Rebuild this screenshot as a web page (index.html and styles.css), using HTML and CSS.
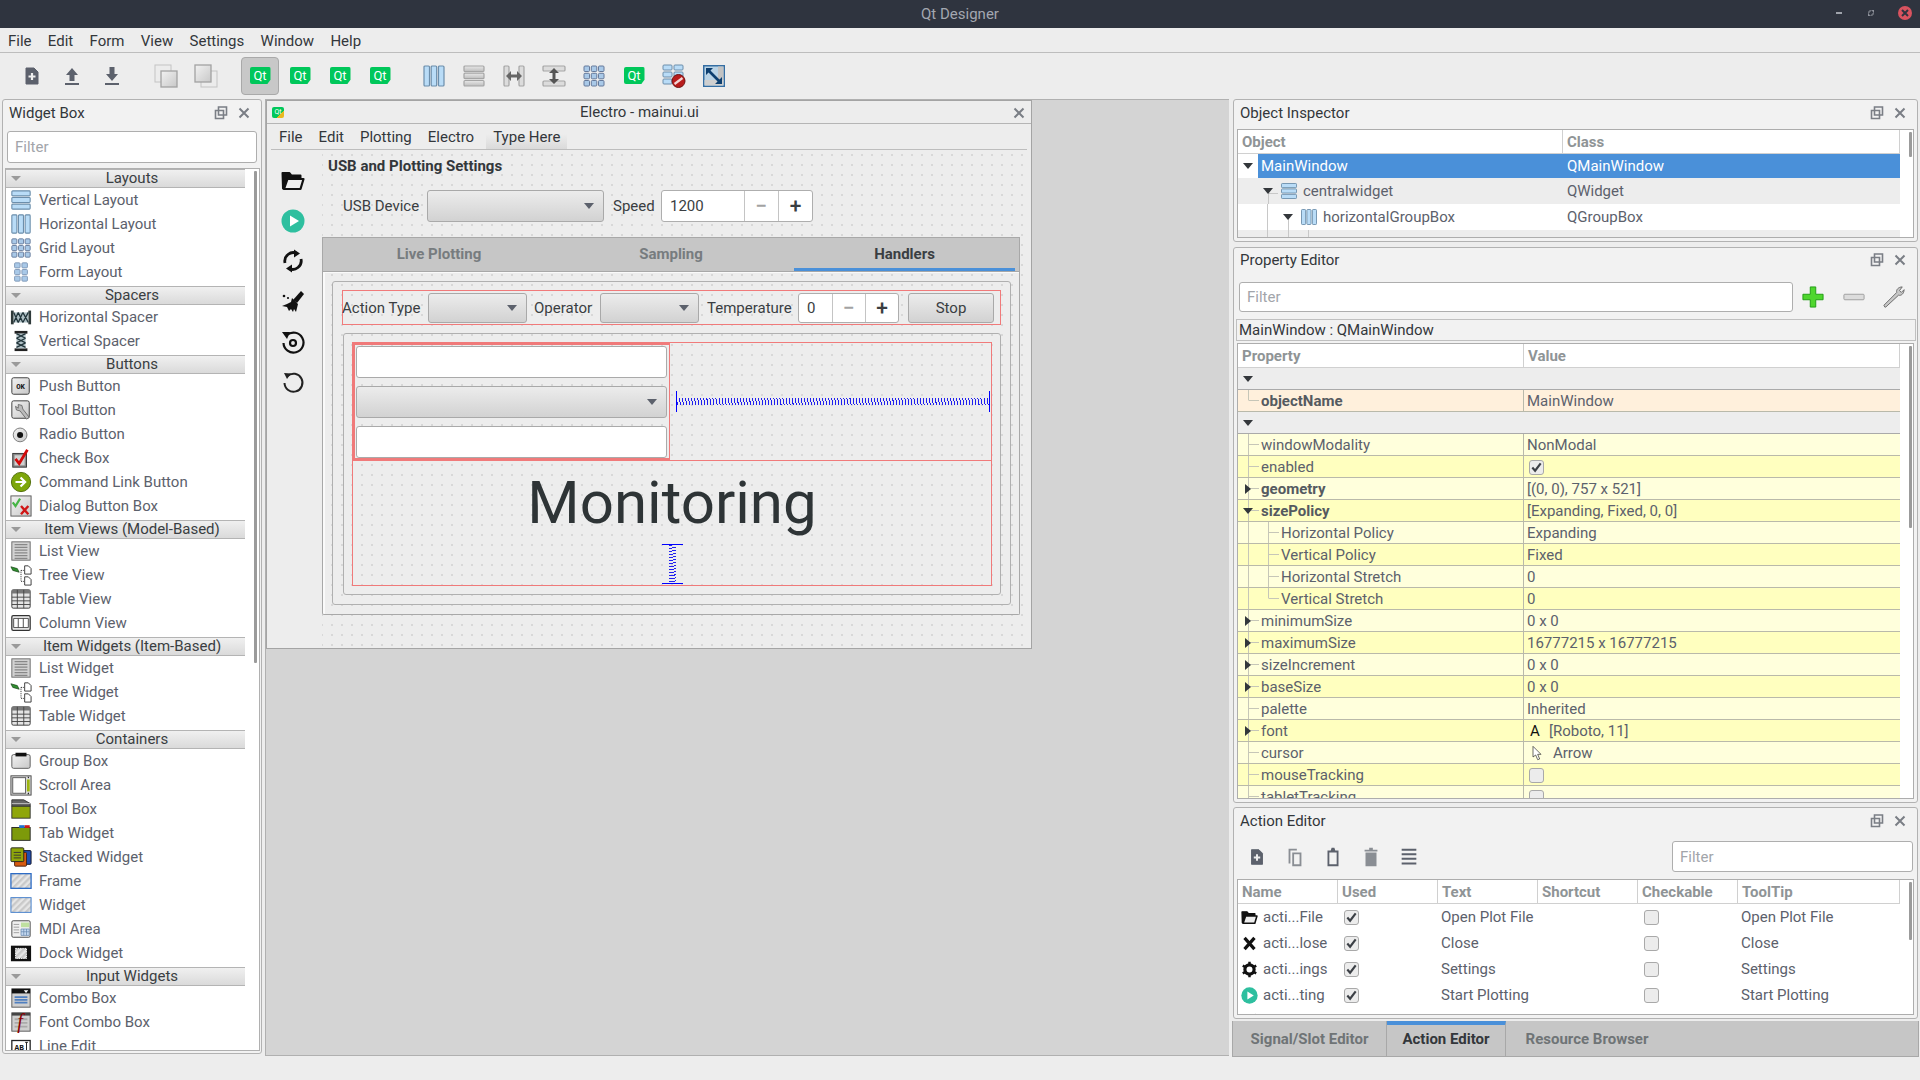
FILE: index.html
```html
<!DOCTYPE html>
<html lang="en">
<head>
    <meta charset="UTF-8">
    <title>Qt Designer</title>
    <link rel="stylesheet" href="styles.css">
</head>
<body>
<svg class="defs" width="0" height="0">
    <defs>
        <linearGradient id="gbar" x1="0" y1="0" x2="0" y2="1"><stop offset="0" stop-color="#e8e8e8"/><stop offset="1" stop-color="#bdbdbd"/></linearGradient>
        <linearGradient id="gsheet" x1="0" y1="0" x2="1" y2="1"><stop offset="0" stop-color="#f2f2f2"/><stop offset="1" stop-color="#c8c8c8"/></linearGradient>
        <pattern id="hatch" width="5" height="5" patternUnits="userSpaceOnUse" patternTransform="rotate(45)"><rect width="5" height="5" fill="#e6e6e6"/><rect width="2.5" height="5" fill="#c9c9c9"/></pattern>
        <symbol id="i-new" viewBox="0 0 24 24"><path d="M6 4h8l4 4v12H6z" fill="#5c616c" stroke="#5c616c" stroke-linejoin="round"/><path d="M12 9v7M8.5 12.500h7" stroke="#eee" stroke-width="2.200"/></symbol>
        <symbol id="i-up" viewBox="0 0 24 24"><path d="M12 4l6 7h-3.500v6h-5v-6H6z" fill="#5c616c"/><rect x="5" y="19" width="14" height="2" fill="#5c616c"/></symbol>
        <symbol id="i-down" viewBox="0 0 24 24"><path d="M9.500 3h5v7H18l-6 7-6-7h3.500z" fill="#5c616c"/><rect x="5" y="19" width="14" height="2" fill="#5c616c"/></symbol>
        <symbol id="i-casc1" viewBox="0 0 24 24"><rect x="1" y="1" width="16" height="17" fill="#ececec" stroke="#c4c4c4"/><rect x="7" y="7" width="16" height="16" fill="url(#gsheet)" stroke="#a2a2a2" stroke-width="1.300"/></symbol>
        <symbol id="i-casc2" viewBox="0 0 24 24"><rect x="7" y="7" width="16" height="16" fill="#ececec" stroke="#c4c4c4"/><rect x="1" y="1" width="16" height="17" fill="url(#gsheet)" stroke="#a2a2a2" stroke-width="1.300"/></symbol>
        <symbol id="i-hl" viewBox="0 0 24 24"><g fill="#b9dcf7" stroke="#6c8eab" stroke-width="1.200"><rect x="2" y="2" width="5.500" height="20" rx="1"/><rect x="9.200" y="2" width="5.500" height="20" rx="1"/><rect x="16.500" y="2" width="5.500" height="20" rx="1"/></g></symbol>
        <symbol id="i-vl" viewBox="0 0 24 24"><g fill="#b9dcf7" stroke="#6c8eab" stroke-width="1.200"><rect x="2" y="2" width="20" height="5.500" rx="1"/><rect x="2" y="9.200" width="20" height="5.500" rx="1"/><rect x="2" y="16.500" width="20" height="5.500" rx="1"/></g></symbol>
        <symbol id="i-vlg" viewBox="0 0 24 24"><g fill="url(#gbar)" stroke="#a5a5a5" stroke-width="1.200"><rect x="2" y="2" width="20" height="5.500" rx="1"/><rect x="2" y="9.200" width="20" height="5.500" rx="1"/><rect x="2" y="16.500" width="20" height="5.500" rx="1"/></g></symbol>
        <symbol id="i-hsp" viewBox="0 0 24 24"><g fill="#dcdcdc" stroke="#a5a5a5" stroke-width="1.200"><rect x="2" y="2" width="5" height="20" rx="1"/><rect x="17" y="2" width="5" height="20" rx="1"/></g><path d="M7 12h10" stroke="#666" stroke-width="3"/><path d="M9 7l-5 5 5 5zM15 7l5 5-5 5z" fill="#666"/></symbol>
        <symbol id="i-vsp" viewBox="0 0 24 24"><g fill="#dcdcdc" stroke="#a5a5a5" stroke-width="1.200"><rect x="1" y="2" width="22" height="5" rx="1"/><rect x="1" y="17" width="22" height="5" rx="1"/></g><path d="M12 7v10" stroke="#555" stroke-width="3"/><path d="M7 9l5-5 5 5zM7 15l5 5 5-5z" fill="#555"/></symbol>
        <symbol id="i-grid" viewBox="0 0 24 24"><g fill="#a9c9e8" stroke="#65799a"><rect x="2" y="2" width="5.500" height="5.500" rx="1"/><rect x="9.300" y="2" width="5.500" height="5.500" rx="1"/><rect x="16.500" y="2" width="5.500" height="5.500" rx="1"/><rect x="2" y="9.300" width="5.500" height="5.500" rx="1"/><rect x="9.300" y="9.300" width="5.500" height="5.500" rx="1"/><rect x="16.500" y="9.300" width="5.500" height="5.500" rx="1"/><rect x="2" y="16.500" width="5.500" height="5.500" rx="1"/><rect x="9.300" y="16.500" width="5.500" height="5.500" rx="1"/><rect x="16.500" y="16.500" width="5.500" height="5.500" rx="1"/></g></symbol>
        <symbol id="i-form" viewBox="0 0 24 24"><g fill="#a9c9e8" stroke="#7f97b6"><rect x="5" y="2" width="6" height="5.500" rx="1"/><rect x="13" y="2" width="6" height="5.500" rx="1"/><rect x="5" y="9.300" width="6" height="5.500" rx="1"/><rect x="13" y="9.300" width="6" height="5.500" rx="1"/><rect x="5" y="16.500" width="6" height="5.500" rx="1"/><rect x="13" y="16.500" width="6" height="5.500" rx="1"/></g></symbol>
        <symbol id="i-break" viewBox="0 0 24 24"><g fill="#b9dcf7" stroke="#6c8eab"><rect x="1" y="1" width="9" height="5" rx="1"/><rect x="12" y="1" width="9" height="5" rx="1"/><rect x="1" y="8" width="9" height="5" rx="1"/><rect x="12" y="8" width="9" height="5" rx="1"/><rect x="1" y="15" width="9" height="5" rx="1"/></g><circle cx="16.500" cy="17" r="6.500" fill="#b81c1c" stroke="#6d1010"/><path d="M12.500 20l8-6" stroke="#f3d6d6" stroke-width="2.200"/></symbol>
        <symbol id="i-adjust" viewBox="0 0 24 24"><rect x="1" y="1" width="22" height="22" fill="#356ea3"/><rect x="2.500" y="2.500" width="19" height="19" fill="#b9d3e6"/><rect x="16" y="2.500" width="5.500" height="14" fill="#c2c2c2"/><rect x="2.500" y="16" width="19" height="5.500" fill="#cfcfcf"/><path d="M5 5l14 14" stroke="#0d3f70" stroke-width="2.600"/><path d="M4 4h7l-7 7zM20 20h-7l7-7z" fill="#0d3f70"/></symbol>
        <symbol id="i-hspc" viewBox="0 0 24 24"><rect x="1" y="5" width="3" height="15" fill="#2f3a3a"/><rect x="20" y="5" width="3" height="15" fill="#2f3a3a"/><rect x="4" y="7" width="16" height="11" fill="#aebfc4"/><path d="M4 7l5 11M9 7l5 11M14 7l6 11M9 7l-5 11M14 7l-5 11M20 7l-6 11" stroke="#21343a" stroke-width="1.400"/></symbol>
        <symbol id="i-vspc" viewBox="0 0 24 24"><rect x="5" y="1" width="14" height="3" fill="#222"/><rect x="5" y="20" width="14" height="3" fill="#222"/><rect x="7" y="4" width="10" height="16" fill="#b2c3c8"/><path d="M7 4l10 5M7 9l10 5M7 14l10 5M17 4L7 9M17 9L7 14M17 14L7 19" stroke="#21343a" stroke-width="1.400"/></symbol>
        <symbol id="i-push" viewBox="0 0 24 24"><rect x="2" y="3" width="19" height="18" rx="2" fill="url(#gsheet)" stroke="#333"/><text x="11.500" y="15.500" class="svgt" font-size="8" text-anchor="middle" fill="#111">OK</text></symbol>
        <symbol id="i-tool" viewBox="0 0 24 24"><rect x="2" y="2" width="19" height="19" rx="2" fill="url(#gsheet)" stroke="#333"/><path d="M9 6l4 1 1 4 7 9-3 2-7-9-4-1-1-4 3 2z" fill="#bbb" stroke="#555" stroke-width=".8"/></symbol>
        <symbol id="i-radio" viewBox="0 0 24 24"><circle cx="11" cy="13" r="7.500" fill="url(#gsheet)" stroke="#777"/><circle cx="11" cy="13" r="3.300" fill="#111"/></symbol>
        <symbol id="i-check" viewBox="0 0 24 24"><rect x="3" y="7" width="15" height="15" fill="#8a8a8a" stroke="#333"/><rect x="5" y="9" width="11" height="11" fill="#d0d0d0"/><path d="M6 13l4 5L19 3" fill="none" stroke="#d30b0b" stroke-width="3"/></symbol>
        <symbol id="i-cmd" viewBox="0 0 24 24"><circle cx="12" cy="12" r="10.500" fill="#7da60a" stroke="#4d6a05"/><path d="M6 12h9M11.500 7l5 5-5 5" fill="none" stroke="#fff" stroke-width="2.400"/></symbol>
        <symbol id="i-dialog" viewBox="0 0 24 24"><rect x="1" y="1" width="22" height="22" fill="url(#gsheet)" stroke="#555"/><path d="M3 8l3 4 5-8" fill="none" stroke="#45b545" stroke-width="2.400"/><path d="M12 12l8 9M20 12l-8 9" stroke="#d01616" stroke-width="2.600"/></symbol>
        <symbol id="i-list" viewBox="0 0 24 24"><rect x="2" y="2" width="20" height="20" fill="#d2d2d2" stroke="#666"/><path d="M5 5h14M5 8h14M5 11h14M5 14h14M5 17h14M5 20h14" stroke="#888" stroke-width="1.500"/></symbol>
        <symbol id="i-tree" viewBox="0 0 24 24"><path d="M1 3l7 2 2 4-7-2z" fill="#2f8f2f" stroke="#123d12" stroke-width=".7"/><path d="M12 7h4M12 7v12M12 19h4" stroke="#222" stroke-dasharray="1 1"/><path d="M16 2h4l3 3v6h-7zM16 14h4l3 3v6h-7z" fill="#fff" stroke="#333"/></symbol>
        <symbol id="i-table" viewBox="0 0 24 24"><rect x="2" y="2" width="20" height="20" rx="1.500" fill="#e4e4e4" stroke="#333"/><rect x="2" y="2" width="20" height="4" fill="#777"/><path d="M2 10h20M2 14h20M2 18h20M8 2v20M15 2v20" stroke="#444"/></symbol>
        <symbol id="i-col" viewBox="0 0 24 24"><rect x="2" y="4" width="20" height="16" rx="1.500" fill="#f0f0f0" stroke="#333" stroke-width="1.400"/><path d="M4 7h16v10H4zM9 7v10M14.500 7v10" fill="#fff" stroke="#444"/></symbol>
        <symbol id="i-group" viewBox="0 0 24 24"><rect x="2" y="5" width="20" height="15" rx="2" fill="url(#gsheet)" stroke="#555"/><rect x="6" y="3" width="12" height="4" fill="#111"/></symbol>
        <symbol id="i-scroll" viewBox="0 0 24 24"><rect x="1" y="2" width="22" height="21" fill="#ddd" stroke="#444"/><rect x="3" y="4" width="14" height="17" fill="#fff" stroke="#555"/><rect x="18.500" y="6" width="3" height="13" fill="#9db510"/><path d="M19 3h2l-1 2zM19 22h2l-1-2z" fill="#111"/></symbol>
        <symbol id="i-toolbox" viewBox="0 0 24 24"><path d="M2 2h13l7 4v3H2z" fill="#666" stroke="#333"/><path d="M2 6h20" stroke="#bbb"/><rect x="2" y="9" width="20" height="13" fill="#8fa60a" stroke="#333"/></symbol>
        <symbol id="i-tab" viewBox="0 0 24 24"><rect x="2" y="6" width="20" height="14" fill="#7d9a0a" stroke="#222"/><rect x="10" y="3.500" width="6" height="3" fill="#1e6fd0"/><rect x="16" y="3.500" width="5.500" height="3" fill="#d01818"/></symbol>
        <symbol id="i-stack" viewBox="0 0 24 24"><rect x="10" y="5" width="13" height="15" rx="1" fill="#1f4fb0" stroke="#112"/><rect x="5" y="7" width="13" height="15" rx="1" fill="#d65a10" stroke="#421"/><rect x="1" y="2" width="14" height="15" rx="1" fill="#8fa60a" stroke="#222"/><path d="M4 7h8M4 10h8M4 13h8" stroke="#333"/></symbol>
        <symbol id="i-frame" viewBox="0 0 24 24"><rect x="1" y="4" width="22" height="16" fill="url(#hatch)" stroke="#2a6ac4" stroke-width="1.400"/></symbol>
        <symbol id="i-widget" viewBox="0 0 24 24"><rect x="1" y="4" width="22" height="16" fill="url(#hatch)" stroke="#3978c9"/></symbol>
        <symbol id="i-mdi" viewBox="0 0 24 24"><rect x="2" y="3" width="20" height="18" rx="1.500" fill="#f0f0f0" stroke="#444"/><rect x="12" y="5" width="9" height="5" fill="#bfe0a0"/><path d="M4 7h6M4 10h6M4 13h6M4 16h6" stroke="#999"/><path d="M12 12h9v7h-9zM15 12v7M18 12v7M12 15h9" fill="#c3d8f0" stroke="#6a8ab0" stroke-width=".8"/></symbol>
        <symbol id="i-dock" viewBox="0 0 24 24"><rect x="1" y="4" width="22" height="17" fill="#111"/><rect x="6" y="7" width="12" height="11" fill="url(#hatch)" stroke="#fff" stroke-dasharray="1.500 1"/></symbol>
        <symbol id="i-combo" viewBox="0 0 24 24"><rect x="2" y="2" width="20" height="20" fill="#cfcfcf" stroke="#555"/><rect x="2" y="2" width="20" height="5" fill="#111"/><path d="M15 3.500h5l-2.500 3z" fill="#fff"/><path d="M5 11h14M5 14h14M5 17h14" stroke="#4f7fc0" stroke-width="2"/></symbol>
        <symbol id="i-fcombo" viewBox="0 0 24 24"><rect x="2" y="2" width="20" height="20" fill="#cfcfcf" stroke="#555"/><rect x="2" y="2" width="20" height="3" fill="#444"/><path d="M5 9h14M5 13h14M5 17h14" stroke="#aaa" stroke-width="2"/><text x="11" y="19" class="svgf" font-size="22" text-anchor="middle" fill="#8c0000">f</text></symbol>
        <symbol id="i-ledit" viewBox="0 0 24 24"><rect x="2" y="6" width="20" height="13" fill="#fff" stroke="#222" stroke-width="1.400"/><text x="10" y="16" class="svgt" font-size="8.500" text-anchor="middle" fill="#111">AB</text><path d="M18 8v9M16.500 8h3M16.500 17h3" stroke="#111"/></symbol>
        <symbol id="i-folder" viewBox="0 0 24 24"><path d="M1.500 4h7l2 2.500h9v3H6.500L3 19.500H2z" fill="#111" stroke="#111" stroke-width="2" stroke-linejoin="round"/><path d="M6.500 10h16l-3 10H3z" fill="#eee" stroke="#111" stroke-width="2.200" stroke-linejoin="round"/></symbol>
        <symbol id="i-play" viewBox="0 0 24 24"><circle cx="12" cy="12" r="11.500" fill="#2ebf9f"/><path d="M9 6.500l9 5.500-9 5.500z" fill="#fff"/></symbol>
        <symbol id="i-refresh" viewBox="0 0 24 24"><path d="M4 14A8.500 8.500 0 0 1 16 4.500M20 10a8.500 8.500 0 0 1-12 9.500" fill="none" stroke="#111" stroke-width="2.800"/><path d="M13 .5l6 4-6 4zM11 23.500l-6-4 6-4z" fill="#111"/></symbol>
        <symbol id="i-broom" viewBox="0 0 24 24"><path d="M20 1l3 3-7 9-4-3z" fill="#111"/><path d="M11 8l6 6-2 8-2-3-1 3-2-3-2 2-2-4-5-1 5-2 4-2z" fill="#111"/><circle cx="3" cy="6" r="1.300" fill="#111"/><circle cx="7" cy="8" r="1.100" fill="#111"/></symbol>
        <symbol id="i-restore" viewBox="0 0 24 24"><path d="M6 5a10 10 0 1 1-3.500 8" fill="none" stroke="#111" stroke-width="2.200"/><path d="M1 2l8 0-3 7z" fill="#111"/><circle cx="12" cy="13" r="3" fill="none" stroke="#111" stroke-width="2.200"/></symbol>
        <symbol id="i-undo" viewBox="0 0 24 24"><path d="M6.500 6a9 9 0 1 1-3 7" fill="none" stroke="#222" stroke-width="2"/><path d="M3 3l7 .5L6 9z" fill="#222"/></symbol>
        <symbol id="i-float" viewBox="0 0 14 14"><path d="M4.500 1h8v8h-8zM1.500 4.500h8v8h-8z" fill="none" stroke="#7a7e85" stroke-width="1.600"/></symbol>
        <symbol id="i-x" viewBox="0 0 14 14"><path d="M2.500 2.500l9 9M11.500 2.500l-9 9" stroke="#7a7e85" stroke-width="2"/></symbol>
        <symbol id="i-plus" viewBox="0 0 24 24"><path d="M9 1h6v8h8v6h-8v8H9v-8H1V9h8z" fill="#4fd62e" stroke="#1c9a10"/></symbol>
        <symbol id="i-minus" viewBox="0 0 24 24"><rect x="1" y="9" width="22" height="6" rx="1" fill="#dcdcdc" stroke="#9a9a9a"/></symbol>
        <symbol id="i-wrench" viewBox="0 0 24 24"><path d="M2 23l-1-2L15 7c-1-3 2-6 6-6l-3 4 2 2 3-3c0 4-3 7-6 6L3 23z" fill="#c8c8c8" stroke="#666"/></symbol>
        <symbol id="i-copy" viewBox="0 0 24 24"><path d="M5 3h9v2H7v14H5zM9 7h10v15H9zM11 9v11h6V9z" fill="#8a8e94"/></symbol>
        <symbol id="i-paste" viewBox="0 0 24 24"><path d="M6 5h3.500l1-3h3l1 3H18v17H6zM8 7v13h8V7z" fill="#5c616c"/></symbol>
        <symbol id="i-trash" viewBox="0 0 24 24"><path d="M6 7h12v15H6zM5 4h14v2H5zM10 2h4v2h-4z" fill="#8a8e94"/></symbol>
        <symbol id="i-lines" viewBox="0 0 24 24"><path d="M4 4h16M4 9h16M4 14h16M4 19h16" stroke="#5c616c" stroke-width="2.200"/></symbol>
        <symbol id="i-bx" viewBox="0 0 24 24"><path d="M5 4l14 16M19 4L5 20" stroke="#111" stroke-width="4.500"/></symbol>
        <symbol id="i-gear" viewBox="0 0 24 24"><circle cx="12" cy="12" r="6.500" fill="none" stroke="#111" stroke-width="4.500"/><path d="M12 1v22M2.500 6.500l19 11M21.500 6.500l-19 11" stroke="#111" stroke-width="3.500" stroke-dasharray="4 14"/></symbol>
        <symbol id="i-cursor" viewBox="0 0 24 24"><path d="M6 2v16l4-3 3 7 3-1-3-7h5z" fill="#fff" stroke="#222"/></symbol>
        <symbol id="i-tick" viewBox="0 0 14 14"><path d="M2.500 7l3 3.500 6-8" fill="none" stroke="#3c4046" stroke-width="2.300"/></symbol>
    </defs>
</svg>

<header class="titlebar">
    <span class="titlebar-text">Qt Designer</span>
    <div class="wm-buttons">
        <span class="wm-min"></span>
        <svg class="wm-max" viewBox="0 0 10 10"><path d="M0 10V4l4 6zM10 0v6L6 0z" fill="#8f939c"/><path d="M0 3L3 0h4L0 7zM10 7l-3 3H3l7-7z" fill="#6f737c"/></svg>
        <span class="wm-close"><svg viewBox="0 0 14 14"><path d="M4 4l6 6M10 4l-6 6" stroke="#2f343f" stroke-width="2"/></svg></span>
    </div>
</header>

<nav class="menubar">
    <span>File</span><span>Edit</span><span>Form</span><span>View</span><span>Settings</span><span>Window</span><span>Help</span>
</nav>

<div class="toolbar">
    <span class="tb"><svg class="ico"><use href="#i-new"/></svg></span>
    <span class="tb"><svg class="ico"><use href="#i-up"/></svg></span>
    <span class="tb"><svg class="ico"><use href="#i-down"/></svg></span>
    <span class="tb-sep"></span>
    <span class="tb"><svg class="ico"><use href="#i-casc1"/></svg></span>
    <span class="tb"><svg class="ico"><use href="#i-casc2"/></svg></span>
    <span class="tb-sep"></span>
    <span class="tb active"><span class="qt">Qt</span></span>
    <span class="tb"><span class="qt">Qt</span></span>
    <span class="tb"><span class="qt">Qt</span></span>
    <span class="tb"><span class="qt">Qt</span></span>
    <span class="tb-sep"></span>
    <span class="tb"><svg class="ico"><use href="#i-hl"/></svg></span>
    <span class="tb"><svg class="ico"><use href="#i-vlg"/></svg></span>
    <span class="tb"><svg class="ico"><use href="#i-hsp"/></svg></span>
    <span class="tb"><svg class="ico"><use href="#i-vsp"/></svg></span>
    <span class="tb"><svg class="ico"><use href="#i-grid"/></svg></span>
    <span class="tb"><span class="qt">Qt</span></span>
    <span class="tb"><svg class="ico"><use href="#i-break"/></svg></span>
    <span class="tb"><svg class="ico"><use href="#i-adjust"/></svg></span>
</div>

<main class="workspace">
    <!-- widget box -->
    <section class="dock widget-box">
        <div class="dock-title"><span>Widget Box</span><svg class="dock-btn"><use href="#i-float"/></svg><svg class="dock-btn"><use href="#i-x"/></svg></div>
        <div class="filter wb-filter">Filter</div>
        <div class="wb-list">
            <span class="thumb wb-thumb"></span>
            <div class="wb-head">Layouts</div>
            <div class="wb-item"><svg><use href="#i-vl"/></svg>Vertical Layout</div>
            <div class="wb-item"><svg><use href="#i-hl"/></svg>Horizontal Layout</div>
            <div class="wb-item"><svg><use href="#i-grid"/></svg>Grid Layout</div>
            <div class="wb-item"><svg><use href="#i-form"/></svg>Form Layout</div>
            <div class="wb-head">Spacers</div>
            <div class="wb-item"><svg><use href="#i-hspc"/></svg>Horizontal Spacer</div>
            <div class="wb-item"><svg><use href="#i-vspc"/></svg>Vertical Spacer</div>
            <div class="wb-head">Buttons</div>
            <div class="wb-item"><svg><use href="#i-push"/></svg>Push Button</div>
            <div class="wb-item"><svg><use href="#i-tool"/></svg>Tool Button</div>
            <div class="wb-item"><svg><use href="#i-radio"/></svg>Radio Button</div>
            <div class="wb-item"><svg><use href="#i-check"/></svg>Check Box</div>
            <div class="wb-item"><svg><use href="#i-cmd"/></svg>Command Link Button</div>
            <div class="wb-item"><svg><use href="#i-dialog"/></svg>Dialog Button Box</div>
            <div class="wb-head">Item Views (Model-Based)</div>
            <div class="wb-item"><svg><use href="#i-list"/></svg>List View</div>
            <div class="wb-item"><svg><use href="#i-tree"/></svg>Tree View</div>
            <div class="wb-item"><svg><use href="#i-table"/></svg>Table View</div>
            <div class="wb-item"><svg><use href="#i-col"/></svg>Column View</div>
            <div class="wb-head">Item Widgets (Item-Based)</div>
            <div class="wb-item"><svg><use href="#i-list"/></svg>List Widget</div>
            <div class="wb-item"><svg><use href="#i-tree"/></svg>Tree Widget</div>
            <div class="wb-item"><svg><use href="#i-table"/></svg>Table Widget</div>
            <div class="wb-head">Containers</div>
            <div class="wb-item"><svg><use href="#i-group"/></svg>Group Box</div>
            <div class="wb-item"><svg><use href="#i-scroll"/></svg>Scroll Area</div>
            <div class="wb-item"><svg><use href="#i-toolbox"/></svg>Tool Box</div>
            <div class="wb-item"><svg><use href="#i-tab"/></svg>Tab Widget</div>
            <div class="wb-item"><svg><use href="#i-stack"/></svg>Stacked Widget</div>
            <div class="wb-item"><svg><use href="#i-frame"/></svg>Frame</div>
            <div class="wb-item"><svg><use href="#i-widget"/></svg>Widget</div>
            <div class="wb-item"><svg><use href="#i-mdi"/></svg>MDI Area</div>
            <div class="wb-item"><svg><use href="#i-dock"/></svg>Dock Widget</div>
            <div class="wb-head">Input Widgets</div>
            <div class="wb-item"><svg><use href="#i-combo"/></svg>Combo Box</div>
            <div class="wb-item"><svg><use href="#i-fcombo"/></svg>Font Combo Box</div>
            <div class="wb-item"><svg><use href="#i-ledit"/></svg>Line Edit</div>
        </div>
    </section>

    <!-- mdi area with the form -->
    <section class="mdi">
        <div class="form-window">
            <div class="form-title">
                <span class="qt qt-small">Qt</span>
                <span class="form-title-text">Electro - mainui.ui</span>
                <svg class="form-close"><use href="#i-x"/></svg>
            </div>
            <div class="form-menu"><span>File</span><span>Edit</span><span>Plotting</span><span>Electro</span><span class="type-here">Type Here</span></div>
            <div class="form-body">
                <div class="side-tools">
                    <svg><use href="#i-folder"/></svg>
                    <svg><use href="#i-play"/></svg>
                    <svg><use href="#i-refresh"/></svg>
                    <svg><use href="#i-broom"/></svg>
                    <svg><use href="#i-restore"/></svg>
                    <svg><use href="#i-undo"/></svg>
                </div>
                <div class="central">
                    <div class="group-title">USB and Plotting Settings</div>
                    <div class="usb-row">
                        <span class="lbl usb-lbl">USB Device</span>
                        <span class="combo usb-combo"></span>
                        <span class="lbl speed-lbl">Speed</span>
                        <span class="spin speed-spin"><span class="spin-val">1200</span><span class="spin-btn minus">−</span><span class="spin-btn">+</span></span>
                    </div>
                    <div class="tabbar">
                        <span class="tab">Live Plotting</span>
                        <span class="tab">Sampling</span>
                        <span class="tab tab-on">Handlers</span>
                    </div>
                    <div class="pane">
                        <div class="outer-frame">
                            <div class="action-row">
                                <span class="lbl act-lbl">Action Type</span>
                                <span class="combo act-combo"></span>
                                <span class="lbl op-lbl">Operator</span>
                                <span class="combo act-combo"></span>
                                <span class="lbl temp-lbl">Temperature</span>
                                <span class="spin temp-spin"><span class="spin-val">0</span><span class="spin-btn minus">−</span><span class="spin-btn">+</span></span>
                                <span class="btn">Stop</span>
                            </div>
                            <div class="inner-frame">
                                <div class="red-box">
                                    <div class="red-top">
                                        <div class="red-left">
                                            <span class="edit"></span>
                                            <span class="combo wide-combo"></span>
                                            <span class="edit"></span>
                                        </div>
                                        <div class="red-right"><span class="hspacer"></span></div>
                                    </div>
                                    <div class="red-bottom">
                                        <div class="monitoring">Monitoring</div>
                                        <span class="vspacer"></span>
                                    </div>
                                </div>
                            </div>
                        </div>
                    </div>
                </div>
            </div>
        </div>
    </section>

    <!-- right column -->
    <section class="right-col">
        <div class="dock inspector">
            <div class="dock-title"><span>Object Inspector</span><svg class="dock-btn"><use href="#i-float"/></svg><svg class="dock-btn"><use href="#i-x"/></svg></div>
            <div class="frame oi-frame">
                <span class="thumb oi-thumb"></span>
                <div class="hdr"><span class="oi-col1">Object</span><span>Class</span></div>
                <div class="oi-row oi-sel"><span class="tri-d oi-a0"></span><span class="oi-col1 oi-i0">MainWindow</span><span>QMainWindow</span></div>
                <div class="oi-row oi-alt oi-l1"><span class="tri-d oi-a1"></span><span class="oi-col1 oi-i1"><svg class="mini"><use href="#i-vl"/></svg>centralwidget</span><span>QWidget</span></div>
                <div class="oi-row oi-l2"><span class="tri-d oi-a2"></span><span class="oi-col1 oi-i2"><svg class="mini"><use href="#i-hl"/></svg>horizontalGroupBox</span><span>QGroupBox</span></div>
                <div class="oi-row oi-alt oi-l3"><span class="oi-col1 oi-i3">label</span><span>QLabel</span></div>
            </div>
        </div>

        <div class="dock prop-editor">
            <div class="dock-title"><span>Property Editor</span><svg class="dock-btn"><use href="#i-float"/></svg><svg class="dock-btn"><use href="#i-x"/></svg></div>
            <div class="pe-tools">
                <div class="filter pe-filter">Filter</div>
                <svg class="pe-ico"><use href="#i-plus"/></svg>
                <svg class="pe-ico"><use href="#i-minus"/></svg>
                <svg class="pe-ico"><use href="#i-wrench"/></svg>
            </div>
            <div class="pe-class">MainWindow : QMainWindow</div>
            <div class="frame pe-frame">
                <span class="thumb pe-thumb"></span>
                <div class="hdr"><span class="pe-col1">Property</span><span class="pe-col2">Value</span></div>
                <div class="prow grp"><span class="tri-d p-arrow"></span></div>
                <div class="prow obj"><span class="pn pn-end"><b>objectName</b></span><span class="pv">MainWindow</span></div>
                <div class="prow grp"><span class="tri-d p-arrow"></span></div>
                <div class="prow lt"><span class="pn">windowModality</span><span class="pv">NonModal</span></div>
                <div class="prow dk"><span class="pn">enabled</span><span class="pv"><span class="cb on"><svg><use href="#i-tick"/></svg></span></span></div>
                <div class="prow lt"><span class="tri-r p-arrow"></span><span class="pn"><b>geometry</b></span><span class="pv">[(0, 0), 757 x 521]</span></div>
                <div class="prow dk"><span class="tri-d p-arrow"></span><span class="pn"><b>sizePolicy</b></span><span class="pv">[Expanding, Fixed, 0, 0]</span></div>
                <div class="prow lt"><span class="pn sub">Horizontal Policy</span><span class="pv">Expanding</span></div>
                <div class="prow dk"><span class="pn sub">Vertical Policy</span><span class="pv">Fixed</span></div>
                <div class="prow lt"><span class="pn sub">Horizontal Stretch</span><span class="pv">0</span></div>
                <div class="prow dk"><span class="pn sub sub-end">Vertical Stretch</span><span class="pv">0</span></div>
                <div class="prow lt"><span class="tri-r p-arrow"></span><span class="pn">minimumSize</span><span class="pv">0 x 0</span></div>
                <div class="prow dk"><span class="tri-r p-arrow"></span><span class="pn">maximumSize</span><span class="pv">16777215 x 16777215</span></div>
                <div class="prow lt"><span class="tri-r p-arrow"></span><span class="pn">sizeIncrement</span><span class="pv">0 x 0</span></div>
                <div class="prow dk"><span class="tri-r p-arrow"></span><span class="pn">baseSize</span><span class="pv">0 x 0</span></div>
                <div class="prow lt"><span class="pn">palette</span><span class="pv">Inherited</span></div>
                <div class="prow dk"><span class="tri-r p-arrow"></span><span class="pn">font</span><span class="pv"><span class="font-a">A</span>[Roboto, 11]</span></div>
                <div class="prow lt"><span class="pn">cursor</span><span class="pv"><svg class="cursor-ico"><use href="#i-cursor"/></svg>Arrow</span></div>
                <div class="prow dk"><span class="pn">mouseTracking</span><span class="pv"><span class="cb"></span></span></div>
                <div class="prow lt"><span class="pn">tabletTracking</span><span class="pv"><span class="cb"></span></span></div>
            </div>
        </div>

        <div class="dock action-editor">
            <div class="dock-title"><span>Action Editor</span><svg class="dock-btn"><use href="#i-float"/></svg><svg class="dock-btn"><use href="#i-x"/></svg></div>
            <div class="ae-tools">
                <svg class="ae-ico"><use href="#i-new"/></svg>
                <svg class="ae-ico"><use href="#i-copy"/></svg>
                <svg class="ae-ico"><use href="#i-paste"/></svg>
                <svg class="ae-ico"><use href="#i-trash"/></svg>
                <svg class="ae-ico"><use href="#i-lines"/></svg>
                <div class="filter ae-filter">Filter</div>
            </div>
            <div class="frame ae-frame">
                <span class="thumb ae-thumb"></span>
                <div class="hdr"><span class="ae-col">Name</span><span class="ae-col">Used</span><span class="ae-col">Text</span><span class="ae-col">Shortcut</span><span class="ae-col">Checkable</span><span class="ae-last">ToolTip</span></div>
                <div class="ae-row"><span class="ae-col ae-name"><svg class="ae-act"><use href="#i-folder"/></svg>acti...File</span><span class="ae-col"><span class="cb on"><svg><use href="#i-tick"/></svg></span></span><span class="ae-col">Open Plot File</span><span class="ae-col"></span><span class="ae-col"><span class="cb"></span></span><span class="ae-last">Open Plot File</span></div>
                <div class="ae-row"><span class="ae-col ae-name"><svg class="ae-act"><use href="#i-bx"/></svg>acti...lose</span><span class="ae-col"><span class="cb on"><svg><use href="#i-tick"/></svg></span></span><span class="ae-col">Close</span><span class="ae-col"></span><span class="ae-col"><span class="cb"></span></span><span class="ae-last">Close</span></div>
                <div class="ae-row"><span class="ae-col ae-name"><svg class="ae-act"><use href="#i-gear"/></svg>acti...ings</span><span class="ae-col"><span class="cb on"><svg><use href="#i-tick"/></svg></span></span><span class="ae-col">Settings</span><span class="ae-col"></span><span class="ae-col"><span class="cb"></span></span><span class="ae-last">Settings</span></div>
                <div class="ae-row"><span class="ae-col ae-name"><svg class="ae-act"><use href="#i-play"/></svg>acti...ting</span><span class="ae-col"><span class="cb on"><svg><use href="#i-tick"/></svg></span></span><span class="ae-col">Start Plotting</span><span class="ae-col"></span><span class="ae-col"><span class="cb"></span></span><span class="ae-last">Start Plotting</span></div>
                <div class="ae-row"><span class="ae-col ae-name"><svg class="ae-act"><use href="#i-broom"/></svg>acti...ting</span><span class="ae-col"><span class="cb on"><svg><use href="#i-tick"/></svg></span></span><span class="ae-col">Stop Plotting</span><span class="ae-col"></span><span class="ae-col"><span class="cb"></span></span><span class="ae-last">Stop Plotting</span></div>
            </div>
        </div>

        <div class="bottom-tabs">
            <span class="btab">Signal/Slot Editor</span>
            <span class="btab btab-on">Action Editor</span>
            <span class="btab">Resource Browser</span>
        </div>
    </section>
</main>
</body>
</html>
```

FILE: styles.css
```css
* {
    margin: 0;
    padding: 0;
    box-sizing: border-box;
}

body {
    width: 1920px;
    height: 1080px;
    overflow: hidden;
    background: #ededed;
    color: #5c616c;
    font-family: Roboto, "Liberation Sans", sans-serif;
    font-size: 15px;
    display: flex;
    flex-direction: column;
}

.defs {
    position: absolute;
}

.svgt {
    font-family: "Liberation Mono", monospace;
    font-weight: bold;
}

.svgf {
    font-family: "Liberation Serif", serif;
    font-style: italic;
}

/* window chrome */
.titlebar {
    height: 28px;
    background: #2f343f;
    color: #a3a7b0;
    display: flex;
    align-items: center;
    justify-content: center;
    position: relative;
    flex: none;
}

.wm-buttons {
    position: absolute;
    right: 8px;
    top: 6px;
    display: flex;
    align-items: center;
    gap: 24px;
    height: 14px;
}

.wm-min {
    width: 6px;
    height: 2px;
    background: #9fa3ab;
}

.wm-max {
    width: 6px;
    height: 6px;
    margin-left: 2px;
}

.wm-close {
    width: 14px;
    height: 14px;
    border-radius: 50%;
    background: #d9535f;
    display: flex;
}

.menubar {
    height: 25px;
    flex: none;
    display: flex;
    align-items: center;
    gap: 16.3px;
    padding: 1px 0 0 8px;
    color: #33373b;
    border-bottom: 1px solid #bdbdbd;
}

.toolbar {
    height: 45px;
    flex: none;
    display: flex;
    align-items: center;
    padding-left: 12px;
}

.tb {
    width: 38px;
    height: 38px;
    margin: 0 1px;
    display: flex;
    align-items: center;
    justify-content: center;
    border: 1px solid transparent;
    border-radius: 4px;
}

.tb.active {
    background: #c8c8c8;
    border-color: #a9a9a9;
}

.tb-sep {
    width: 14px;
}

.ico {
    width: 24px;
    height: 24px;
}

.qt {
    width: 21px;
    height: 17px;
    background: #00c75a;
    color: #fff;
    font-size: 13px;
    line-height: 17px;
    text-align: center;
    border-radius: 2px;
    clip-path: polygon(0 0, 100% 0, 100% 75%, 85% 100%, 0 100%);
}

/* main area */
.workspace {
    height: 958px;
    flex: none;
    display: flex;
    align-items: flex-start;
    padding-top: 1px;
}

.dock {
    background: #f2f2f2;
    border: 1px solid #b2b2b2;
    border-radius: 3px;
    display: flex;
    flex-direction: column;
}

.dock-title {
    height: 28px;
    flex: none;
    display: flex;
    align-items: center;
    padding: 0 10px 2px 6px;
    color: #33373b;
}

.dock-title span {
    flex: 1;
}

.dock-btn {
    width: 14px;
    height: 14px;
    margin-left: 9px;
}

.filter {
    background: #fff;
    border: 1px solid #aeaeae;
    border-radius: 3px;
    color: #a2a5aa;
    display: flex;
    align-items: center;
    padding-left: 7px;
    flex: none;
}

.thumb {
    position: absolute;
    width: 3px;
    background: #9b9b9b;
    border-radius: 1px;
}

/* widget box */
.widget-box {
    width: 260px;
    height: 955px;
    margin-left: 2px;
    flex: none;
}

.wb-filter {
    width: 250px;
    height: 32px;
    margin: 3px 0 5px 4px;
}

.wb-list {
    position: relative;
    height: 883px;
    margin-left: 2px;
    width: 255px;
    background: #fff;
    border: 1px solid #b0b0b0;
    overflow: hidden;
}

.wb-thumb {
    left: 248px;
    top: 2px;
    height: 492px;
}

.wb-head {
    height: 19px;
    margin-top: 2px;
    width: 239px;
    padding-left: 13px;
    background: linear-gradient(#f0f0f0, #dadada);
    border-top: 1px solid #b4b4b4;
    border-bottom: 1px solid #b4b4b4;
    color: #3a3e42;
    text-align: center;
    line-height: 17px;
    position: relative;
}

.wb-head:first-of-type {
    margin-top: 0;
}

.wb-head::before {
    content: "";
    position: absolute;
    left: 5px;
    top: 6px;
    border-left: 5px solid transparent;
    border-right: 5px solid transparent;
    border-top: 5px solid #9a9a9a;
}

.wb-item {
    height: 24px;
    display: flex;
    align-items: center;
    padding-left: 4px;
    width: 239px;
    white-space: nowrap;
}

.wb-item svg {
    width: 22px;
    height: 22px;
    margin-right: 7px;
    flex: none;
}

/* mdi area */
.mdi {
    width: 964px;
    height: 957px;
    margin-left: 3px;
    background: #d4d4d4;
    border-top: 1px solid #b0b0b0;
    border-left: 1px solid #b0b0b0;
    border-bottom: 1px solid #b0b0b0;
    flex: none;
}

.form-window {
    width: 766px;
    height: 549px;
    background-color: #ededed;
    border: 1px solid #a4a4a4;
    display: flex;
    flex-direction: column;
}

.form-title {
    height: 23px;
    flex: none;
    display: flex;
    align-items: center;
    position: relative;
    border-bottom: 1px solid #b5b5b5;
    color: #33373b;
    justify-content: center;
}

.qt-small {
    position: absolute;
    left: 5px;
    top: 6px;
    width: 12px;
    height: 11px;
    font-size: 7px;
    line-height: 11px;
    background: linear-gradient(135deg, #00c75a 68%, #e8b820 68%);
    clip-path: none;
}

.form-title-text {
    margin-left: -19px;
}

.form-close {
    position: absolute;
    right: 5px;
    top: 5px;
    width: 14px;
    height: 14px;
}

.form-menu {
    height: 26px;
    flex: none;
    display: flex;
    align-items: center;
    gap: 16px;
    padding-left: 8px;
    color: #33373b;
    margin: 0 4px;
    border-bottom: 1px solid #bdbdbd;
}

.type-here {
    height: 25px;
    padding: 0 7px;
    margin-left: -4px;
    display: flex;
    align-items: center;
    background: linear-gradient(#ededed 40%, #dadada);
}

.form-body {
    flex: 1;
    display: flex;
    background-image: radial-gradient(circle, #c0c0c0 0.6px, transparent 0.8px);
    background-size: 10px 10px;
}

.side-tools {
    width: 55px;
    flex: none;
    display: flex;
    flex-direction: column;
    align-items: center;
    padding: 19px 4px 0 0;
    gap: 16.2px;
    background: #ededed;
}

.side-tools svg {
    width: 24px;
    height: 24px;
    flex: none;
}

.central {
    width: 698px;
    padding-top: 6px;
}

.group-title {
    font-weight: bold;
    color: #33373b;
    line-height: 20px;
    margin-left: 6px;
}

.lbl {
    color: #3a3e42;
    white-space: nowrap;
    flex: none;
}

.usb-row {
    display: flex;
    align-items: center;
    margin: 14px 0 15px 21px;
    height: 32px;
}

.usb-lbl {
    width: 84px;
}

.usb-combo {
    width: 177px;
}

.speed-lbl {
    margin-left: 9px;
    width: 48px;
}

.speed-spin {
    width: 152px;
    height: 32px;
}

.combo {
    display: block;
    height: 32px;
    background: linear-gradient(#ececec, #d2d2d2);
    border: 1px solid #a9a9a9;
    border-radius: 3px;
    position: relative;
    flex: none;
}

.combo::after {
    content: "";
    position: absolute;
    right: 9px;
    top: 50%;
    margin-top: -3px;
    border-left: 5px solid transparent;
    border-right: 5px solid transparent;
    border-top: 6px solid #5c616c;
}

.spin {
    display: flex;
    background: #fff;
    border: 1px solid #aeaeae;
    border-radius: 3px;
    flex: none;
}

.spin-val {
    flex: 1;
    padding-left: 8px;
    display: flex;
    align-items: center;
    color: #3a3e42;
}

.spin-btn {
    width: 34px;
    border-left: 1px solid #c4c4c4;
    display: flex;
    align-items: center;
    justify-content: center;
    font-size: 21px;
    font-weight: 500;
    color: #3a3e42;
}

.spin-btn.minus {
    color: #a2a2a2;
}

.tabbar {
    height: 35px;
    background: #c6c6c6;
    display: flex;
    border: 1px solid #a8a8a8;
    color: #777c7f;
    font-weight: bold;
}

.tab {
    width: 232px;
    flex: none;
    display: flex;
    align-items: center;
    justify-content: center;
    padding-bottom: 2px;
}

.tab-on {
    width: 221px;
    height: 33px;
    margin-left: 7px;
    padding: 2px 0 0;
    color: #3a3e42;
    border-bottom: 3px solid #4a90d9;
}

.pane {
    height: 343px;
    border: 1px solid #a8a8a8;
    border-top: 0;
    border-radius: 0 0 2px 2px;
    padding: 9px 8px 9px 9px;
    box-shadow: inset 2px 1px 0 #fafafa;
}

.outer-frame {
    height: 324px;
    border: 1px solid #b0b0b0;
    border-radius: 3px;
    padding: 8px 9px 0 9px;
}

.action-row {
    height: 35px;
    border: 1px solid #f07a7a;
    display: flex;
    align-items: center;
}

.act-lbl {
    width: 76px;
    margin-left: -1px;
    width: 78px;
}

.act-combo {
    width: 99px;
    height: 30px;
    margin-left: 8px;
}

.op-lbl {
    width: 58px;
    margin-left: 7px;
}

.temp-lbl {
    width: 84px;
    margin-left: 8px;
}

.temp-spin {
    width: 101px;
    height: 30px;
    margin-left: 7px;
}

.action-row .spin-btn {
    width: 33px;
}

.btn {
    width: 86px;
    height: 30px;
    margin-left: 9px;
    border: 1px solid #a9a9a9;
    border-radius: 3px;
    background: linear-gradient(#ececec, #d2d2d2);
    display: flex;
    align-items: center;
    justify-content: center;
    color: #3a3e42;
}

.inner-frame {
    height: 262px;
    width: 658px;
    margin: 8px 0 0 1px;
    border: 1px solid #b0b0b0;
    border-radius: 3px;
    padding: 8px;
}

.red-box {
    height: 244px;
    border: 1px solid #f07a7a;
    display: flex;
    flex-direction: column;
}

.red-top {
    height: 118px;
    flex: none;
    display: flex;
    border-bottom: 1px solid #f07a7a;
}

.red-left {
    width: 317px;
    border: 2px solid #f07a7a;
    border-right-width: 1px;
    display: flex;
    flex-direction: column;
    gap: 8px;
    padding: 1px 2px 0 1px;
}

.edit {
    display: block;
    height: 32px;
    background: #fff;
    border: 1px solid #aaa;
    border-radius: 3px;
}

.red-right {
    flex: 1;
    display: flex;
    align-items: center;
    padding: 0 1px 0 6px;
}

.hspacer {
    width: 100%;
    height: 21px;
    border-left: 1px solid #00f;
    border-right: 1px solid #00f;
    background: repeating-linear-gradient(80deg, #2020f0 0 1px, transparent 1px 3px) center / 100% 7px no-repeat;
}

.red-bottom {
    flex: 1;
    display: flex;
    flex-direction: column;
    align-items: center;
}

.monitoring {
    font-size: 60px;
    line-height: 70px;
    color: #2e3436;
    margin-top: 7px;
}

.vspacer {
    width: 21px;
    height: 40px;
    margin-top: 6px;
    border-top: 1px solid #00f;
    border-bottom: 1px solid #00f;
    background: repeating-linear-gradient(170deg, #2020f0 0 1px, transparent 1px 3px) center / 7px 100% no-repeat;
}

/* right docks */
.right-col {
    width: 685px;
    margin-left: 4px;
    flex: none;
    display: flex;
    flex-direction: column;
}

.inspector {
    height: 143px;
}

.prop-editor {
    height: 556px;
    margin-top: 5px;
}

.prop-editor .dock-title {
    padding-bottom: 4px;
}

.action-editor {
    height: 212px;
    margin-top: 4px;
}

.frame {
    position: relative;
    margin: 1px 3px 0;
    background: #fff;
    border: 1px solid #adadad;
    overflow: hidden;
    flex: none;
}

.hdr {
    height: 24px;
    width: 662px;
    display: flex;
    align-items: center;
    color: #8f9496;
    font-weight: bold;
    border-bottom: 1px solid #d0d0d0;
    border-right: 1px solid #d0d0d0;
}

.hdr span {
    padding-left: 4px;
    height: 100%;
    display: flex;
    align-items: center;
}

.oi-frame {
    height: 109px;
}

.oi-thumb {
    right: 1px;
    top: 2px;
    height: 25px;
}

.oi-col1 {
    width: 325px;
    flex: none;
    border-right: 1px solid #d0d0d0;
}

.oi-row {
    height: 26px;
    width: 662px;
    display: flex;
    align-items: center;
    position: relative;
    white-space: nowrap;
}

.oi-row .oi-col1 {
    border-right: 0;
    display: flex;
    align-items: center;
}

.oi-row > span:last-child {
    padding-left: 4px;
}

.oi-sel {
    height: 24px;
    color: #fff;
    background: linear-gradient(90deg, #fff 20px, #4a90d9 20px);
}

.oi-alt {
    background-color: #ededed;
}

.oi-l1 {
    background-image:
        linear-gradient(#c8c8c8, #c8c8c8),
        linear-gradient(#c8c8c8, #c8c8c8);
    background-position: 30px 60%, 30px 100%;
    background-size: 10px 1px, 1px 50%;
    background-repeat: no-repeat;
}

.oi-l2 {
    background-image:
        linear-gradient(#c8c8c8, #c8c8c8),
        linear-gradient(#c8c8c8, #c8c8c8);
    background-position: 29px 0, 50px 100%;
    background-size: 1px 100%, 1px 50%;
    background-repeat: no-repeat;
}

.oi-l3 {
    background-image:
        linear-gradient(#c8c8c8, #c8c8c8),
        linear-gradient(#c8c8c8, #c8c8c8),
        linear-gradient(#c8c8c8, #c8c8c8);
    background-position: 29px 0, 50px 0, 70px 0;
    background-size: 1px 100%, 1px 100%, 1px 100%;
    background-repeat: no-repeat;
}

.oi-i0 {
    padding-left: 23px;
}

.oi-i1 {
    padding-left: 42px;
}

.oi-i2 {
    padding-left: 62px;
}

.oi-i3 {
    padding-left: 84px;
}

.mini {
    width: 18px;
    height: 18px;
    margin-right: 5px;
    flex: none;
}

.tri-d, .tri-r {
    position: absolute;
    top: 50%;
    width: 0;
    height: 0;
}

.tri-d {
    margin-top: -3px;
    border-left: 5px solid transparent;
    border-right: 5px solid transparent;
    border-top: 6px solid #33373b;
}

.tri-r {
    margin-top: -5px;
    border-top: 5px solid transparent;
    border-bottom: 5px solid transparent;
    border-left: 6px solid #33373b;
}

.oi-a0 {
    left: 5px;
}

.oi-a1 {
    left: 25px;
}

.oi-a2 {
    left: 45px;
}

/* property editor */
.pe-tools {
    display: flex;
    align-items: center;
    margin: 6px 0 0 5px;
    height: 30px;
}

.pe-filter {
    width: 554px;
    height: 30px;
    margin-right: 9px;
}

.pe-ico {
    width: 22px;
    height: 22px;
    margin-right: 18.5px;
    flex: none;
}

.pe-class {
    height: 22px;
    margin: 7px 1px 0 2px;
    border: 1px solid #c0c0c0;
    color: #33373b;
    line-height: 20px;
    padding-left: 2px;
    flex: none;
}

.pe-frame {
    height: 456px;
    margin-top: 2px;
}

.pe-thumb {
    right: 1px;
    top: 2px;
    height: 182px;
}

.pe-col1 {
    width: 286px;
    border-right: 1px solid #d0d0d0;
    flex: none;
}

.prow {
    height: 22px;
    width: 662px;
    display: flex;
    position: relative;
    border-bottom: 1px solid #b9b9aa;
    white-space: nowrap;
}

.prow.grp {
    background: #ededed;
    border-bottom-color: #aaa;
}

.prow.obj {
    background: #fff0dc;
}

.prow.lt {
    background: #ffffdc;
}

.prow.dk {
    background: #ffffbf;
}

.p-arrow {
    left: 5px;
    z-index: 1;
}

.tri-r.p-arrow {
    left: 7px;
}

.pn {
    width: 286px;
    flex: none;
    padding-left: 23px;
    line-height: 22px;
    border-right: 1px solid #b9b9aa;
    background:
        linear-gradient(#c6c6b8, #c6c6b8) 10px 0 / 1px 100% no-repeat,
        linear-gradient(#c6c6b8, #c6c6b8) 11px 50% / 10px 1px no-repeat;
}

.pn.pn-end {
    background:
        linear-gradient(#c6c6b8, #c6c6b8) 10px 0 / 1px 50% no-repeat,
        linear-gradient(#c6c6b8, #c6c6b8) 11px 50% / 10px 1px no-repeat;
}

.pn.sub {
    padding-left: 43px;
    background:
        linear-gradient(#c6c6b8, #c6c6b8) 10px 0 / 1px 100% no-repeat,
        linear-gradient(#c6c6b8, #c6c6b8) 30px 0 / 1px 100% no-repeat,
        linear-gradient(#c6c6b8, #c6c6b8) 31px 50% / 10px 1px no-repeat;
}

.pn.sub-end {
    background:
        linear-gradient(#c6c6b8, #c6c6b8) 10px 0 / 1px 100% no-repeat,
        linear-gradient(#c6c6b8, #c6c6b8) 30px 0 / 1px 50% no-repeat,
        linear-gradient(#c6c6b8, #c6c6b8) 31px 50% / 10px 1px no-repeat;
}

.pn b {
    color: #555a60;
}

.pv {
    padding: 1px 0 0 3px;
    display: flex;
    align-items: center;
}

.font-a {
    color: #111;
    font-size: 15px;
    width: 22px;
    padding-left: 3px;
}

.cursor-ico {
    width: 16px;
    height: 18px;
    margin: 0 8px 0 2px;
}

.cb {
    display: inline-flex;
    width: 15px;
    height: 15px;
    border: 1px solid #a9a9a9;
    border-radius: 3px;
    background: #ececec;
    margin-left: 2px;
    flex: none;
}

.cb svg {
    width: 13px;
    height: 13px;
}

/* action editor */
.ae-tools {
    height: 31px;
    margin-top: 5px;
    padding-left: 4px;
    display: flex;
    align-items: center;
    flex: none;
}

.ae-ico {
    width: 22px;
    height: 22px;
    margin: 0 8px;
    flex: none;
}

.ae-filter {
    width: 241px;
    height: 31px;
    margin-left: auto;
    margin-right: 4px;
}

.ae-frame {
    height: 136px;
    margin-top: 7px;
}

.ae-thumb {
    right: 1px;
    top: 2px;
    height: 58px;
}

.ae-col {
    width: 100px;
    flex: none;
    border-right: 1px solid transparent;
}

.hdr .ae-col {
    border-right-color: #d0d0d0;
}

.ae-last {
    flex: 1;
    padding-left: 3px;
}

.ae-row {
    height: 26px;
    width: 662px;
    display: flex;
    align-items: center;
    white-space: nowrap;
}

.ae-row .ae-col {
    padding-left: 3px;
    display: flex;
    align-items: center;
}

.ae-row .cb {
    margin-left: 3px;
}

.ae-name {
    overflow: hidden;
}

.ae-act {
    width: 17px;
    height: 17px;
    margin-right: 5px;
    flex: none;
}

.bottom-tabs {
    height: 36px;
    width: 687px;
    margin: 2px -2px 0 -1px;
    background: #c6c6c6;
    border: 1px solid #a8a8a8;
    border-top: 0;
    display: flex;
    color: #6f7476;
    font-weight: bold;
}

.btab {
    width: 154px;
    display: flex;
    align-items: center;
    justify-content: center;
    border-right: 1px solid #a8a8a8;
}

.btab:last-child {
    border-right: 0;
    width: 162px;
}

.btab-on {
    width: 119px;
    padding-bottom: 3px;
    color: #33373b;
    border-top: 4px solid #4a90d9;
}
```
